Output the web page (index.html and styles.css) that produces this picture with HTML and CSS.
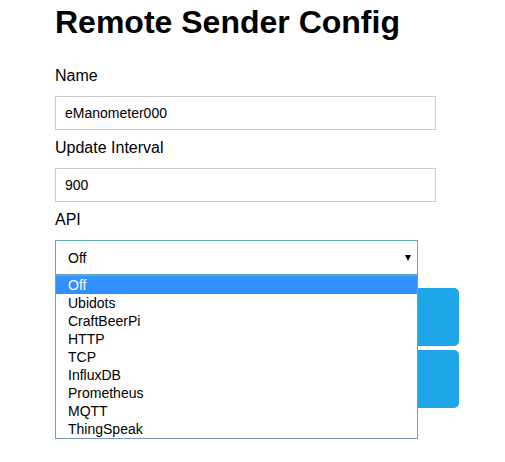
FILE: index.html
```html
<!DOCTYPE html>
<html>
<head>
<meta charset="utf-8">
<link rel="stylesheet" href="styles.css">
</head>
<body>
<div class="page">
  <h1 class="title">Remote Sender Config</h1>
  <label class="label">Name</label>
  <input class="field" type="text" value="eManometer000">
  <label class="label">Update Interval</label>
  <input class="field" type="text" value="900">
  <label class="label">API</label>
  <div class="select-wrap">
    <div class="select">
      <span>Off</span>
      <span class="arrow"></span>
    </div>
    <ul class="menu">
      <li class="opt active">Off</li>
      <li class="opt">Ubidots</li>
      <li class="opt">CraftBeerPi</li>
      <li class="opt">HTTP</li>
      <li class="opt">TCP</li>
      <li class="opt">InfluxDB</li>
      <li class="opt">Prometheus</li>
      <li class="opt">MQTT</li>
      <li class="opt">ThingSpeak</li>
    </ul>
  </div>
  <div class="buttons">
    <button class="btn">Save</button>
    <button class="btn">Back</button>
  </div>
</div>
</body>
</html>
```

FILE: styles.css
```css
html, body {
  margin: 0;
  padding: 0;
  background: #fff;
}
body {
  min-height: 462px;
  font-family: "Liberation Sans", Arial, sans-serif;
  color: #000;
}
.page {
  width: 404px;
  min-height: 462px;
  margin-left: 55px;
  display: flex;
  flex-direction: column;
  align-items: flex-start;
}
.title {
  font-size: 32px;
  font-weight: 700;
  line-height: 37px;
  margin: 4px 0 0 0;
}
.label {
  display: block;
  font-size: 16px;
  line-height: 18px;
  margin: 9px 0 11px 0;
}
.title + .label {
  margin-top: 26px;
}
.field {
  box-sizing: border-box;
  width: 381px;
  height: 34px;
  margin: 0;
  border: 1px solid #cccccc;
  padding: 0 0 0 9px;
  font-family: "Liberation Sans", Arial, sans-serif;
  font-size: 14px;
  color: #000;
  outline: none;
}
.select-wrap {
  position: relative;
  width: 363px;
}
.select {
  box-sizing: border-box;
  height: 35px;
  border: 1px solid #5fa9b6;
  padding: 0 6px 0 12px;
  display: flex;
  align-items: center;
  justify-content: space-between;
  font-size: 14px;
}
.arrow {
  width: 0;
  height: 0;
  border-left: 3.5px solid transparent;
  border-right: 3.5px solid transparent;
  border-top: 6px solid #000;
}
.menu {
  position: absolute;
  top: 35px;
  left: 0;
  z-index: 2;
  box-sizing: border-box;
  width: 363px;
  margin: 0;
  padding: 0;
  list-style: none;
  background: #fff;
  border: 1px solid #7a98cf;
}
.opt {
  font-size: 14px;
  line-height: 18px;
  height: 18px;
  padding-left: 12px;
  color: #000;
}
.opt.active {
  background: #3390ff;
  color: #fff;
}
.buttons {
  margin-top: 13px;
  width: 404px;
  display: flex;
  flex-direction: column;
  gap: 4px;
}
.btn {
  width: 404px;
  height: 58px;
  border: 0;
  border-radius: 5px;
  background: #1fa6e8;
  color: #fff;
  font-size: 19px;
  font-family: "Liberation Sans", Arial, sans-serif;
  padding: 0;
}
```
